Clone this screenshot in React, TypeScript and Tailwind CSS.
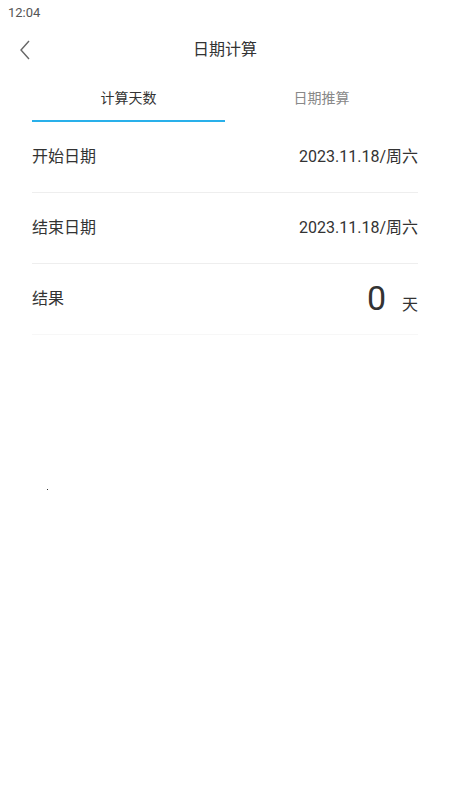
import React, { useState } from 'react';

const font = { fontFamily: '"Roboto", "Noto Sans CJK SC", sans-serif' };

const Row = ({ label, children, last }: { label: string; children: React.ReactNode; last?: boolean }) => (
  <div className={`flex items-center justify-between h-[71px] border-b ${last ? 'border-[#f7f7f7]' : 'border-[#eeeeee]'}`}>
    <span className="text-[16px] text-[#333]">{label}</span>
    {children}
  </div>
);

export default function App() {
  const [tab, setTab] = useState(0);
  const tabs = ['计算天数', '日期推算'];

  return (
    <div className="w-[450px] h-[800px] bg-white relative overflow-hidden" style={font}>
      {/* status bar */}
      <div className="h-[26px] flex items-center pl-2 text-[13px] text-[#555]">12:04</div>

      {/* header */}
      <div className="h-[48px] flex items-center relative">
        <button className="absolute left-[18px] top-[14px] w-[16px] h-[20px]">
          <svg width="14" height="20" viewBox="0 0 14 20" fill="none" stroke="#666" strokeWidth="1.4">
            <path d="M11 1 L3 10 L11 19" />
          </svg>
        </button>
        <div className="flex-1 text-center text-[16px] text-[#333]">日期计算</div>
      </div>

      {/* tabs */}
      <div className="mx-8 flex h-[48px]">
        {tabs.map((t, i) => (
          <button
            key={t}
            onClick={() => setTab(i)}
            className={`flex-1 flex flex-col items-center justify-end ${i === tab ? 'text-[#333]' : 'text-[#888]'}`}
          >
            <span className="text-[14px] leading-[20px] mb-[12px]">{t}</span>
            <span className={`block w-full h-[2px] ${i === tab ? 'bg-[#29b0ea]' : 'bg-transparent'}`} />
          </button>
        ))}
      </div>

      {/* list */}
      <div className="mx-8">
        <Row label="开始日期">
          <span className="text-[16px] text-[#333]">2023.11.18/周六</span>
        </Row>
        <Row label="结束日期">
          <span className="text-[16px] text-[#333]">2023.11.18/周六</span>
        </Row>
        <Row label="结果" last>
          <div className="flex items-baseline gap-[16px]">
            <span className="text-[34px] leading-none text-[#333]">0</span>
            <span className="text-[16px] text-[#333]">天</span>
          </div>
        </Row>
      </div>

      <div className="absolute left-[47px] top-[489px] w-px h-px bg-[#333]" />
    </div>
  );
}
